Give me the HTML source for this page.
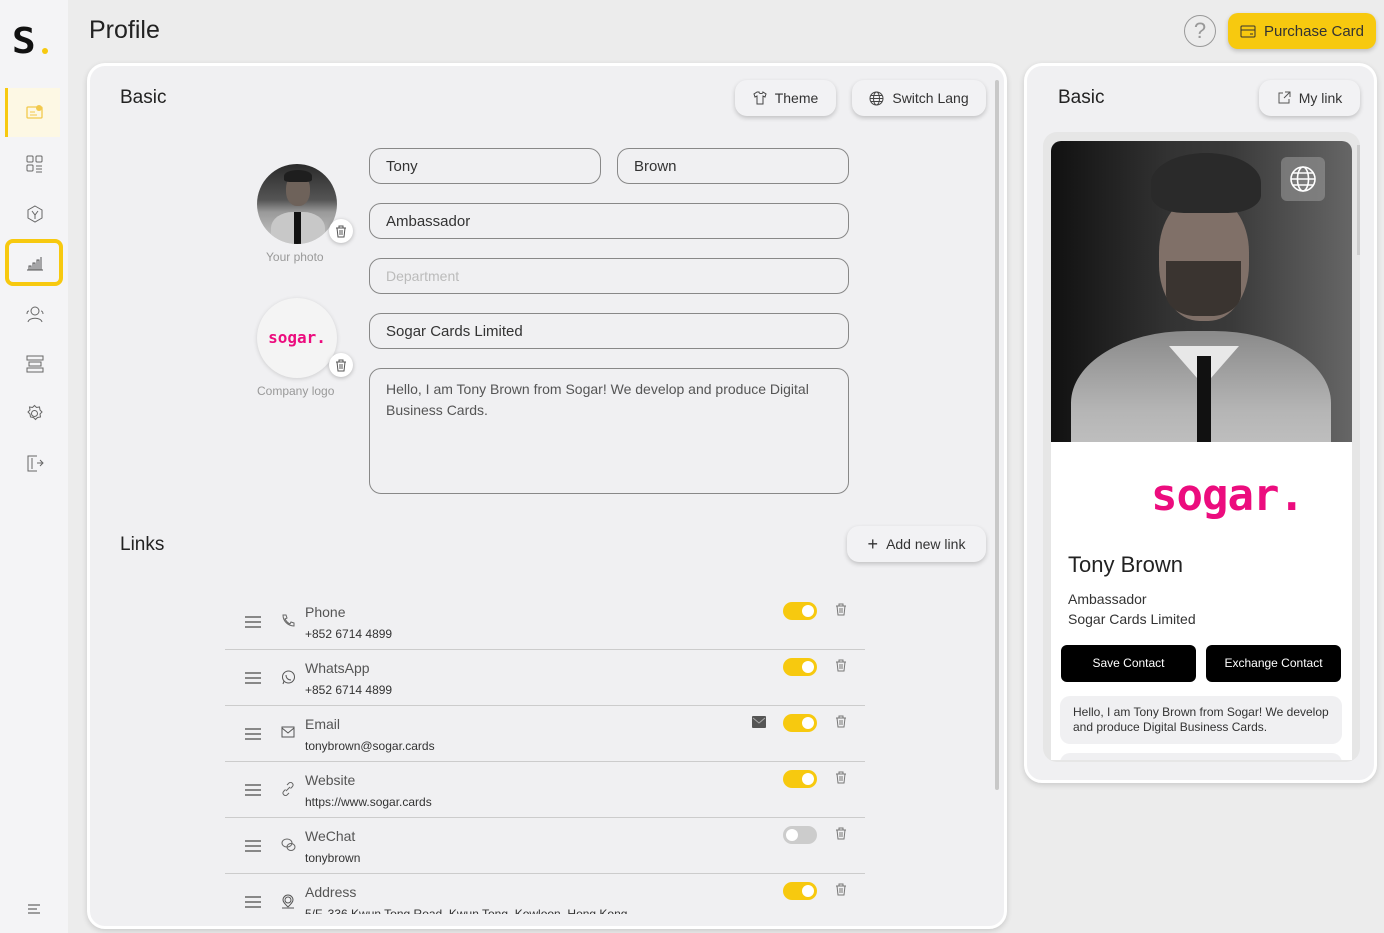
<!DOCTYPE html>
<html><head><meta charset="utf-8"><style>
*{box-sizing:border-box;margin:0;padding:0}
body{width:1384px;height:933px;overflow:hidden;background:#ececec;font-family:"Liberation Sans",sans-serif;color:#333;position:relative}
.abs{position:absolute}
.side{left:0;top:0;width:68px;height:933px;background:#f4f4f6}
.panel{background:#f0f0f2;border:3px solid #fff;border-radius:18px;box-shadow:0 2px 6px rgba(0,0,0,.15)}
.btn{background:#f2f2f4;border-radius:12px;box-shadow:0 2px 5px rgba(0,0,0,.2);font-size:14px;color:#333;display:flex;align-items:center;justify-content:center;gap:8px}
.inp{border:1px solid #888;border-radius:12px;height:36px;font-size:15px;padding:0 16px;display:flex;align-items:center;color:#333}
.h{font-size:19px;color:#222}
.row{left:225px;width:640px;height:56px;border-bottom:1px solid #ccc}
.row .drag{position:absolute;left:20px;top:22px;width:16px;height:12px;border-top:2px solid #888;border-bottom:2px solid #888}
.row .drag:after{content:"";position:absolute;left:0;top:3px;width:16px;height:2px;background:#888}
.row .lbl{position:absolute;left:80px;top:10px;font-size:14px;color:#555}
.row .val{position:absolute;left:80px;top:33px;font-size:12px;color:#333}
.row .tg{position:absolute;left:558px;top:8px;width:34px;height:18px;border-radius:9px;background:#f7c90f}
.row .tg:after{content:"";position:absolute;right:3px;top:3px;width:12px;height:12px;border-radius:50%;background:#fff}
.row .tg.off{background:#ccc}.row .tg.off:after{left:3px;right:auto}
.row .tr{position:absolute;left:610px;top:9px}
.row .ic{position:absolute;left:56px;top:20px}
.sog{font-family:"DejaVu Sans Mono","Liberation Mono",monospace;font-weight:bold;color:#ec0c7e}
</style></head><body>
<div class="abs side">
 <div class="abs" style="left:13px;top:24px;font-size:36px;font-weight:900;color:#111;line-height:36px;font-family:'DejaVu Sans Mono',monospace;transform:scaleX(1.1)">S</div>
 <div class="abs" style="left:42px;top:48px;width:6px;height:6px;border-radius:50%;background:#f7c90f"></div>
 <div class="abs" style="left:5px;top:88px;width:55px;height:49px;background:#fdf8e4;border-left:3px solid #f7c90f"></div>
 <svg class="abs" style="left:26px;top:104px" width="18" height="16"><rect x="1" y="3" width="15" height="11" rx="1" fill="none" stroke="#f2c94c" stroke-width="1.3"/><circle cx="13" cy="4" r="3" fill="#f2c94c"/><path d="M4 8h5M4 11h7" stroke="#f2c94c"/></svg>
 <svg class="abs" style="left:26px;top:155px" width="18" height="18" fill="none" stroke="#666"><rect x="1" y="1" width="6" height="6" rx="1"/><rect x="10" y="1" width="6" height="6" rx="1"/><rect x="1" y="10" width="6" height="6" rx="1"/><path d="M10 11h6M10 14h6M10 17h6"/></svg>
 <svg class="abs" style="left:26px;top:205px" width="18" height="18" fill="none" stroke="#666"><path d="M9 1l7 4v8l-7 4-7-4V5z"/><path d="M6 6l3 4 3-4M9 10v4"/></svg>
 <div class="abs" style="left:5px;top:239px;width:58px;height:47px;border:4px solid #f7c90f;border-radius:8px"></div>
 <svg class="abs" style="left:26px;top:255px" width="18" height="16" fill="none" stroke="#555"><path d="M1 15h16M3 15v-4h2v4M7 15v-7h2v7M11 15v-10h2v10M15 15v-13"/></svg>
 <svg class="abs" style="left:25px;top:305px" width="20" height="18" fill="none" stroke="#666"><circle cx="10" cy="6" r="4"/><path d="M3 17c1-5 13-5 14 0M2 9c0-2 1-3 2-3M18 9c0-2-1-3-2-3"/></svg>
 <svg class="abs" style="left:26px;top:355px" width="18" height="18" fill="none" stroke="#666"><rect x="1" y="1" width="16" height="4"/><rect x="3" y="7" width="12" height="4"/><rect x="1" y="13" width="16" height="4"/></svg>
 <svg class="abs" style="left:25px;top:404px" width="19" height="19" fill="none" stroke="#666"><circle cx="9.5" cy="9.5" r="3"/><path d="M9.5 1.5l2 2 3-.5.5 3 2 2-2 2 .5 3-3 .5-2 2-2-2-3-.5-.5-3-2-2 2-2-.5-3 3 .5z"/></svg>
 <svg class="abs" style="left:26px;top:454px" width="18" height="18" fill="none" stroke="#666"><path d="M11 2H2v15h9M6 4v11M11 9h6M14 6l3 3-3 3"/></svg>
 <svg class="abs" style="left:27px;top:903px" width="14" height="12" stroke="#444"><path d="M1 2h12M1 6h9M1 10h12"/></svg>
</div>
<div class="abs" style="left:89px;top:16px;font-size:25px;color:#222">Profile</div>
<div class="abs" style="left:1184px;top:15px;width:32px;height:32px;border:1.5px solid #999;border-radius:50%;text-align:center;font-size:22px;line-height:29px;color:#999">?</div>
<div class="abs btn" style="left:1228px;top:13px;width:148px;height:36px;background:#f7c90f;border-radius:10px;font-size:15px;color:#333"><svg width="16" height="13" fill="none" stroke="#333"><rect x="1" y="1" width="14" height="11" rx="1"/><path d="M1 5h14M10 9h3"/></svg>Purchase Card</div>

<div class="abs panel" style="left:87px;top:63px;width:920px;height:866px"></div>
<div class="abs" style="left:995px;top:80px;width:4px;height:710px;background:#c8c8c8;border-radius:2px"></div>
<div class="abs h" style="left:120px;top:87px">Basic</div>
<div class="abs btn" style="left:735px;top:80px;width:101px;height:36px"><svg width="14" height="14" fill="none" stroke="#444"><path d="M4 1L1 3l1 3 2-1v8h6V5l2 1 1-3-3-2c0 2-4 2-4 0z"/></svg>Theme</div>
<div class="abs btn" style="left:852px;top:80px;width:134px;height:36px"><svg width="15" height="15" fill="none" stroke="#444"><circle cx="7.5" cy="7.5" r="6.5"/><ellipse cx="7.5" cy="7.5" rx="3" ry="6.5"/><path d="M1 7.5h13M2 4.5h11M2 10.5h11"/></svg>Switch Lang</div>

<div class="abs" style="left:257px;top:164px;width:80px;height:80px;border-radius:50%;overflow:hidden;background:linear-gradient(#2a2a2a,#555 45%,#999 60%,#ccc)">
 <div class="abs" style="left:29px;top:10px;width:24px;height:32px;border-radius:45%;background:#6e625a"></div>
 <div class="abs" style="left:27px;top:6px;width:28px;height:12px;border-radius:50% 50% 20% 20%;background:#1e1e1e"></div>
 <div class="abs" style="left:14px;top:48px;width:54px;height:40px;border-radius:40% 40% 0 0;background:#c8c8c8"></div>
 <div class="abs" style="left:37px;top:48px;width:7px;height:32px;background:#111"></div>
</div>
<div class="abs" style="left:329px;top:219px;width:24px;height:24px;border-radius:50%;background:#fff;box-shadow:0 1px 4px rgba(0,0,0,.25)"><svg style="margin:6px" width="12" height="13" fill="none" stroke="#555"><path d="M1 3h10M4 3V1h4v2M2 3l1 9h6l1-9M5 5v5M7 5v5"/></svg></div>
<div class="abs" style="left:266px;top:250px;font-size:12px;color:#999">Your photo</div>
<div class="abs sog" style="left:257px;top:298px;width:80px;height:80px;border-radius:50%;background:#f4f4f4;box-shadow:0 1px 4px rgba(0,0,0,.15);text-align:center;line-height:80px;font-size:16px">sogar.</div>
<div class="abs" style="left:329px;top:353px;width:24px;height:24px;border-radius:50%;background:#fff;box-shadow:0 1px 4px rgba(0,0,0,.25)"><svg style="margin:6px" width="12" height="13" fill="none" stroke="#555"><path d="M1 3h10M4 3V1h4v2M2 3l1 9h6l1-9M5 5v5M7 5v5"/></svg></div>
<div class="abs" style="left:257px;top:384px;font-size:12px;color:#999">Company logo</div>

<div class="abs inp" style="left:369px;top:148px;width:232px">Tony</div>
<div class="abs inp" style="left:617px;top:148px;width:232px">Brown</div>
<div class="abs inp" style="left:369px;top:203px;width:480px">Ambassador</div>
<div class="abs inp" style="left:369px;top:258px;width:480px;color:#bbb;font-size:14px">Department</div>
<div class="abs inp" style="left:369px;top:313px;width:480px">Sogar Cards Limited</div>
<div class="abs inp" style="left:369px;top:368px;width:480px;height:126px;align-items:flex-start;padding-top:10px;font-size:14px;line-height:21px;color:#555">Hello, I am Tony Brown from Sogar!  We develop and produce Digital Business Cards.</div>

<div class="abs h" style="left:120px;top:534px">Links</div>
<div class="abs btn" style="left:847px;top:526px;width:139px;height:36px"><span style="font-size:18px">+</span>Add new link</div>

<div class="abs row" style="top:594px"><div class="drag"></div><svg class="ic" width="14" height="14" fill="none" stroke="#666"><path d="M2 1l3 0 1 3-2 1c1 2 3 4 5 5l1-2 3 1v3c-6 0-11-5-11-11z"/></svg><div class="lbl">Phone</div><div class="val">+852 6714 4899</div><div class="tg"></div><div class="tr"><svg width="12" height="13" fill="none" stroke="#777"><path d="M1 3h10M4 3V1h4v2M2 3l1 9h6l1-9M5 5v5M7 5v5"/></svg></div></div>
<div class="abs row" style="top:650px"><div class="drag"></div><svg class="ic" width="15" height="15" fill="none" stroke="#555"><circle cx="7.5" cy="7" r="6"/><path d="M2 14l1-3M5 5c0 3 2 5 5 5"/></svg><div class="lbl">WhatsApp</div><div class="val">+852 6714 4899</div><div class="tg"></div><div class="tr"><svg width="12" height="13" fill="none" stroke="#777"><path d="M1 3h10M4 3V1h4v2M2 3l1 9h6l1-9M5 5v5M7 5v5"/></svg></div></div>
<div class="abs row" style="top:706px"><div class="drag"></div><svg class="ic" width="14" height="12" fill="none" stroke="#555"><rect x="1" y="1" width="12" height="10"/><path d="M1 2l6 5 6-5"/></svg><div class="lbl">Email</div><div class="val">tonybrown@sogar.cards</div><svg style="position:absolute;left:527px;top:10px" width="14" height="12"><rect width="14" height="12" rx="1" fill="#555"/><path d="M1 2l6 5 6-5" stroke="#aaa" fill="none"/></svg><div class="tg"></div><div class="tr"><svg width="12" height="13" fill="none" stroke="#777"><path d="M1 3h10M4 3V1h4v2M2 3l1 9h6l1-9M5 5v5M7 5v5"/></svg></div></div>
<div class="abs row" style="top:762px"><div class="drag"></div><svg class="ic" width="14" height="14" fill="none" stroke="#666"><path d="M5 9l4-4M6 3l2-2a2.5 2.5 0 013.5 3.5l-2 2M8 11l-2 2a2.5 2.5 0 01-3.5-3.5l2-2"/></svg><div class="lbl">Website</div><div class="val">https://www.sogar.cards</div><div class="tg"></div><div class="tr"><svg width="12" height="13" fill="none" stroke="#777"><path d="M1 3h10M4 3V1h4v2M2 3l1 9h6l1-9M5 5v5M7 5v5"/></svg></div></div>
<div class="abs row" style="top:818px"><div class="drag"></div><svg class="ic" width="15" height="14" fill="none" stroke="#666"><ellipse cx="6" cy="5" rx="5" ry="4"/><ellipse cx="10" cy="9" rx="4" ry="3.5"/></svg><div class="lbl">WeChat</div><div class="val">tonybrown</div><div class="tg off"></div><div class="tr"><svg width="12" height="13" fill="none" stroke="#777"><path d="M1 3h10M4 3V1h4v2M2 3l1 9h6l1-9M5 5v5M7 5v5"/></svg></div></div>
<div class="abs row" style="top:874px;height:40px;overflow:hidden;border:none"><div class="drag"></div><svg class="ic" width="14" height="15" fill="none" stroke="#555"><circle cx="7" cy="6" r="3"/><path d="M7 13c-3-3-5-5-5-7a5 5 0 0110 0c0 2-2 4-5 7M1 14h12"/></svg><div class="lbl">Address</div><div class="val">5/F, 336 Kwun Tong Road, Kwun Tong, Kowloon, Hong Kong</div><div class="tg"></div><div class="tr"><svg width="12" height="13" fill="none" stroke="#777"><path d="M1 3h10M4 3V1h4v2M2 3l1 9h6l1-9M5 5v5M7 5v5"/></svg></div></div>

<div class="abs panel" style="left:1024px;top:63px;width:353px;height:720px"></div>
<div class="abs h" style="left:1058px;top:87px">Basic</div>
<div class="abs btn" style="left:1259px;top:80px;width:101px;height:36px"><svg width="14" height="14" fill="none" stroke="#555"><path d="M6 2H2v10h10V8M8 1h5v5M13 1L7 7"/></svg>My link</div>
<div class="abs" style="left:1043px;top:132px;width:317px;height:630px;background:#e6e6e6;border-radius:14px"></div>
<div class="abs" style="left:1051px;top:141px;width:301px;height:619px;background:#fff;border-radius:10px 10px 0 0;overflow:hidden">
 <div class="abs" style="left:0;top:0;width:301px;height:301px;overflow:hidden;background:linear-gradient(90deg,#111,#333 40%,#3a3a3a 60%,#666)">
  <div class="abs" style="left:20px;top:190px;width:260px;height:160px;border-radius:45% 45% 0 0;background:linear-gradient(#8a8a8a,#b5b5b5 50%,#ccc)"></div>
  <div class="abs" style="left:108px;top:55px;width:90px;height:125px;border-radius:45%;background:#807068"></div>
  <div class="abs" style="left:100px;top:12px;width:110px;height:60px;border-radius:50% 50% 30% 30%;background:#2a2a2a"></div>
  <div class="abs" style="left:115px;top:120px;width:75px;height:55px;border-radius:0 0 40% 40%;background:#3a3430"></div>
  <div class="abs" style="left:118px;top:205px;width:70px;height:40px;background:#e8e8e8;clip-path:polygon(0 0,50% 100%,100% 0)"></div>
  <div class="abs" style="left:146px;top:215px;width:14px;height:90px;background:#111"></div>
 </div>
 <div class="abs" style="left:230px;top:16px;width:44px;height:44px;background:rgba(150,150,150,.6);border-radius:6px"><svg style="margin:8px" width="28" height="28" fill="none" stroke="#fff" stroke-width="1.6"><circle cx="14" cy="14" r="12"/><ellipse cx="14" cy="14" rx="5.5" ry="12"/><path d="M2 14h24M4 8h20M4 20h20"/></svg></div>
 <div class="abs sog" style="left:100px;top:330px;font-size:44px;line-height:50px;letter-spacing:-1px">sogar.</div>
 <div class="abs" style="left:17px;top:411px;font-size:22px;color:#222">Tony Brown</div>
 <div class="abs" style="left:17px;top:448px;font-size:14px;color:#333;line-height:20px">Ambassador<br>Sogar Cards Limited</div>
 <div class="abs" style="left:10px;top:504px;width:135px;height:37px;background:#000;border-radius:6px;color:#fff;font-size:12px;text-align:center;line-height:37px">Save Contact</div>
 <div class="abs" style="left:155px;top:504px;width:135px;height:37px;background:#000;border-radius:6px;color:#fff;font-size:12px;text-align:center;line-height:37px">Exchange Contact</div>
 <div class="abs" style="left:9px;top:555px;width:282px;height:48px;background:#f0f0f2;border-radius:10px;font-size:12px;color:#333;padding:9px 13px;line-height:15px">Hello, I am Tony Brown from Sogar! We develop and produce Digital Business Cards.</div>
 <div class="abs" style="left:9px;top:612px;width:282px;height:20px;background:#f0f0f2;border-radius:10px"></div>
</div>
<div class="abs" style="left:1357px;top:145px;width:3px;height:110px;background:#ccc"></div>
</body></html>
